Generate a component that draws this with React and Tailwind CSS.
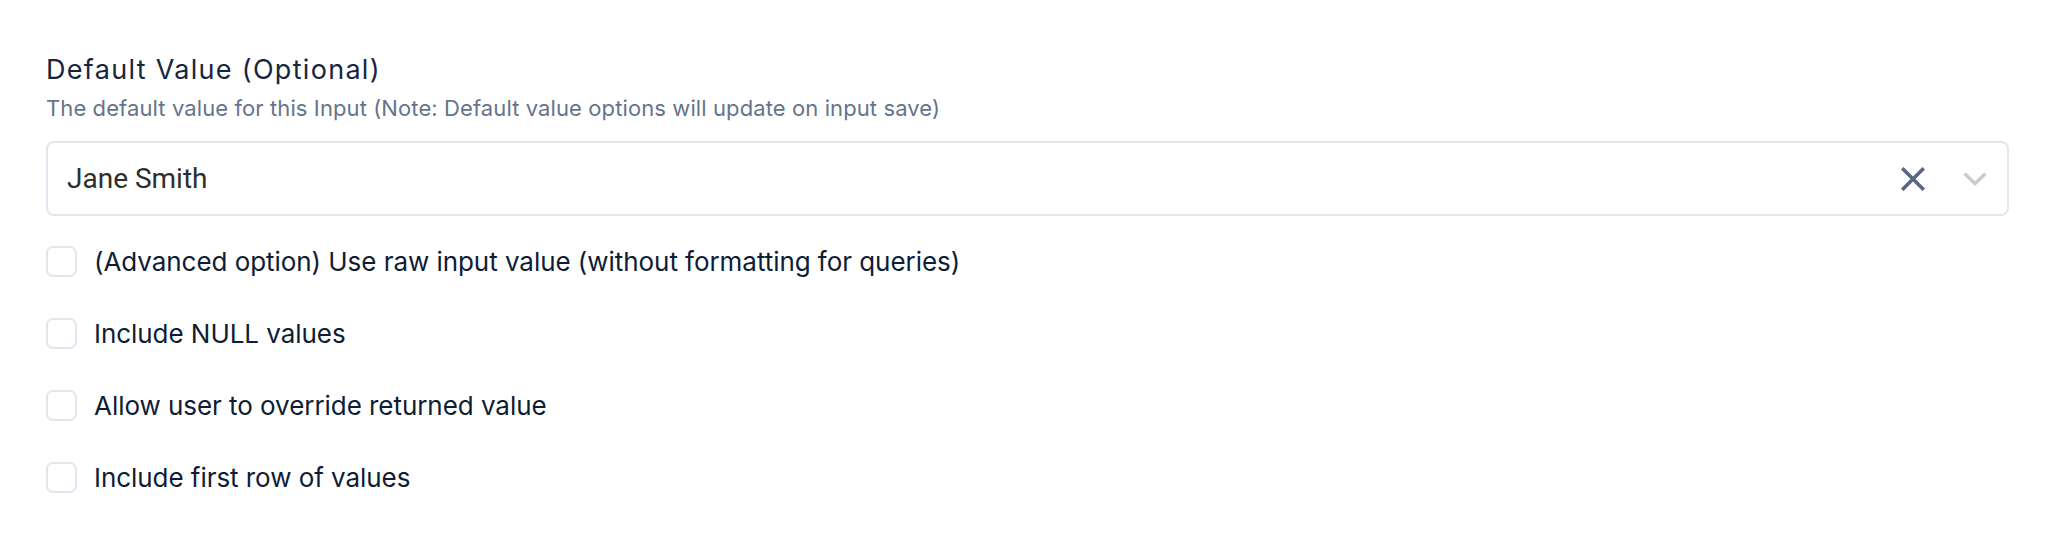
import React from "react";

function Check({ label }) {
  return (
    <label className="flex items-center gap-[17px] h-[31px]">
      <span className="w-[31px] h-[31px] rounded-[7px] border-2 border-[#e2e6ee] bg-white shrink-0" />
      <span className="text-[26px] tracking-[-0.05px] text-[#0e1d35] leading-none">{label}</span>
    </label>
  );
}

export default function App() {
  return (
    <div className="w-[2054px] h-[548px] bg-white pl-[46px] pr-[45px] pt-[54px]" style={{ fontFamily: "Inter, 'Noto Sans', sans-serif" }}>
      <div className="text-[27px] leading-[32px] tracking-[1.3px] text-[#17263e]">Default Value (Optional)</div>
      <div className="mt-[8px] text-[22px] leading-[28px] tracking-[0.1px] text-[#66748b]">
        The default value for this Input (Note: Default value options will update on input save)
      </div>
      <div className="mt-[19px] h-[75px] border-2 border-[#e2e6ee] rounded-[8px] flex items-center pl-[19px] pr-[20px]">
        <span className="flex-1 text-[28px] text-[#2e2e2e]" style={{ fontFamily: "Roboto, sans-serif" }}>Jane Smith</span>
        <svg width="24" height="24" viewBox="0 0 24 24" className="mr-[38px]">
          <path d="M2.5 2.5 L21.5 21.5 M21.5 2.5 L2.5 21.5" stroke="#5b6682" strokeWidth="3.6" strokeLinecap="square" />
        </svg>
        <svg width="24" height="16" viewBox="0 0 24 16">
          <path d="M1.5 2.5 L12 12.5 L22.5 2.5" stroke="#cccccc" strokeWidth="3.6" fill="none" />
        </svg>
      </div>
      <div className="mt-[30px] flex flex-col gap-[41px]">
        <Check label="(Advanced option) Use raw input value (without formatting for queries)" />
        <Check label="Include NULL values" />
        <Check label="Allow user to override returned value" />
        <Check label="Include first row of values" />
      </div>
    </div>
  );
}
